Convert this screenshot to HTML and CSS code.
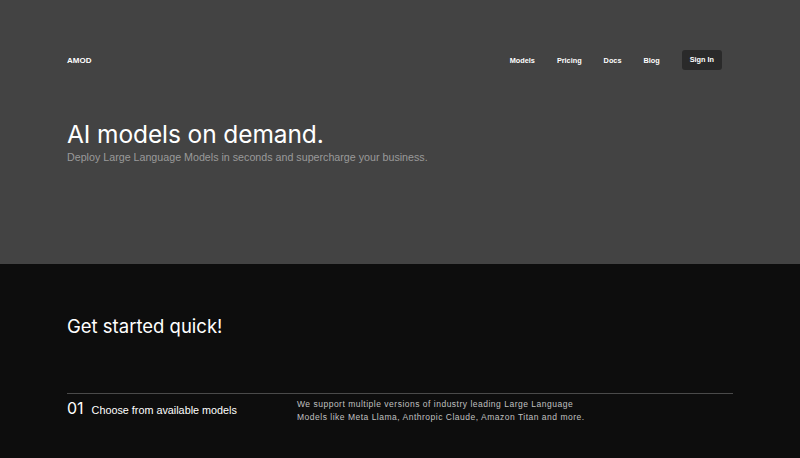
FILE: index.html
```html
<!DOCTYPE html>
<html lang="en">
<head>
<meta charset="utf-8">
<title>AMOD</title>
<link rel="stylesheet" href="styles.css">
</head>
<body>
<header class="hero">
  <nav class="nav">
    <div class="brand">AMOD</div>
    <div class="links">
      <a href="#">Models</a>
      <a href="#">Pricing</a>
      <a href="#">Docs</a>
      <a href="#">Blog</a>
      <a href="#" class="signin">Sign In</a>
    </div>
  </nav>
  <div class="intro">
    <h1>AI models on demand.</h1>
    <p>Deploy Large Language Models in seconds and supercharge your business.</p>
  </div>
</header>
<main class="start">
  <h2>Get started quick!</h2>
  <div class="step">
    <div class="step-title"><span class="num">01</span><span class="label">Choose from available models</span></div>
    <p class="step-text">We support multiple versions of industry leading Large Language Models like Meta Llama, Anthropic Claude, Amazon Titan and more.</p>
  </div>
</main>
</body>
</html>
```
FILE: styles.css
```css
* { box-sizing: border-box; }
html, body { margin: 0; padding: 0; }
body {
  font-family: "Inter", "Liberation Sans", sans-serif;
  background: #0d0d0d;
  color: #fff;
  height: 458px;
  overflow: hidden;
}
.hero {
  background: #434343;
  height: 264px;
  padding: 0 67px;
}
.nav {
  display: flex;
  justify-content: space-between;
  align-items: center;
  padding: 50px 11px 0 0;
}
.brand {
  font-family: "Liberation Sans", sans-serif;
  font-size: 8px;
  font-weight: 700;
}
.links {
  display: flex;
  align-items: center;
  gap: 22px;
}
.links a {
  font-family: "Liberation Sans", sans-serif;
  color: #fff;
  text-decoration: none;
  font-size: 7.3px;
  font-weight: 700;
}
.links a.signin {
  background: #2a2a2a;
  border-radius: 3px;
  padding: 6px 8px;
  line-height: 8px;
}
.intro { padding-top: 49px; }
h1 {
  margin: 0;
  font-size: 24.5px;
  font-weight: 400;
  letter-spacing: -0.1px;
  line-height: 30px;
}
.intro p {
  margin: 0;
  font-family: "Liberation Sans", sans-serif;
  font-size: 10.7px;
  color: #9a9a9a;
  line-height: 16px;
}
.start { padding: 50px 67px 0; }
h2 {
  margin: 0;
  font-size: 18.5px;
  font-weight: 400;
  line-height: 24px;
}
.step {
  margin-top: 55px;
  border-top: 1px solid #4a4a4a;
  display: flex;
  padding-top: 3px;
}
.step-title {
  width: 230px;
  display: flex;
  align-items: baseline;
  gap: 8px;
}
.num { font-size: 16px; line-height: 22px; }
.label {
  font-family: "Liberation Sans", sans-serif;
  font-size: 10.8px;
}
.step-text {
  margin: 0;
  padding-top: 1px;
  width: 300px;
  font-family: "Liberation Sans", sans-serif;
  font-size: 8.5px;
  letter-spacing: 0.5px;
  line-height: 13px;
  color: #c0c0c0;
}
```
